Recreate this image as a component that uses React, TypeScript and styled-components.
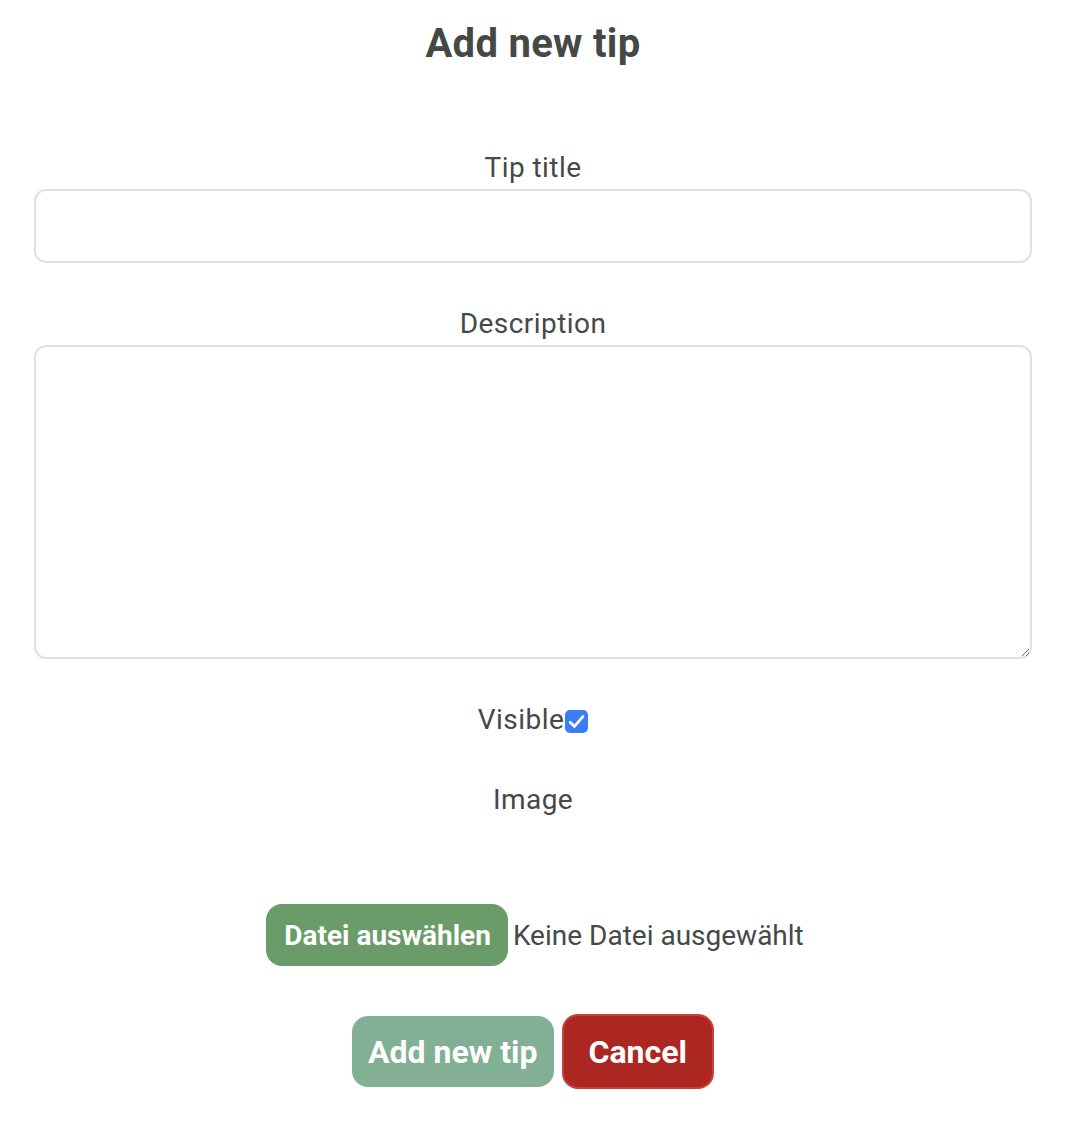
import styled, { createGlobalStyle } from "styled-components";

const GlobalStyle = createGlobalStyle`
    html, body {
        margin: 0;
        padding: 0;
        background: #ffffff;
    }
    body {
        font-family: Roboto, "Liberation Sans", Arial, sans-serif;
        color: #464946;
    }
`;

const App = () => {
    return (
        <>
            <GlobalStyle />
            <Page>
                <Title>Add new tip</Title>
                <Form onSubmit={(e) => e.preventDefault()}>
                    <Field>
                        <Label htmlFor="tip-title">Tip title</Label>
                        <TextInput id="tip-title" type="text" />
                    </Field>
                    <Field>
                        <Label htmlFor="tip-description">Description</Label>
                        <TextArea id="tip-description" />
                    </Field>
                    <CheckRow>
                        <Label as="span">Visible</Label>
                        <CheckBox>
                            <svg width="19" height="19" viewBox="0 0 16 16">
                                <path d="M2.6 8.6 L6.3 12.2 L13.4 3.8" fill="none" stroke="#fff" strokeWidth="2.3" strokeLinecap="round" strokeLinejoin="round" />
                            </svg>
                        </CheckBox>
                    </CheckRow>
                    <ImageField>
                        <Label as="span">Image</Label>
                    </ImageField>
                    <FileRow>
                        <FileButton>
                            Datei auswählen
                            <HiddenInput type="file" accept="image/*" />
                        </FileButton>
                        <FileName>Keine Datei ausgewählt</FileName>
                    </FileRow>
                    <Actions>
                        <SubmitButton type="submit">Add new tip</SubmitButton>
                        <CancelButton type="button">Cancel</CancelButton>
                    </Actions>
                </Form>
            </Page>
        </>
    );
};

const Page = styled.div`
    width: 1066px;
    box-sizing: border-box;
    padding: 20px 34px 40px;
    display: flex;
    flex-direction: column;
    align-items: stretch;
`;

const Title = styled.h1`
    margin: 0;
    font-size: 40px;
    line-height: 48px;
    font-weight: 700;
    letter-spacing: 0.3px;
    text-align: center;
    color: #454944;
`;

const Form = styled.form`
    display: flex;
    flex-direction: column;
    margin-top: 83px;
`;

const Field = styled.div`
    display: flex;
    flex-direction: column;
    align-items: stretch;
    gap: 4px;
    margin-bottom: 44px;
`;

const Label = styled.label`
    display: block;
    text-align: center;
    font-size: 28px;
    line-height: 34px;
    letter-spacing: 0.45px;
    color: #464946;
`;

const fieldBox = `
    box-sizing: border-box;
    width: 100%;
    border: 2px solid #dfe1e5;
    border-radius: 12px;
    background: #fff;
    font-family: Roboto, "Liberation Sans", Arial, sans-serif;
    font-size: 28px;
    color: #464946;
    outline: none;
`;

const TextInput = styled.input`
    ${fieldBox}
    height: 74px;
    padding: 0 16px;
`;

const TextArea = styled.textarea`
    ${fieldBox}
    height: 314px;
    padding: 12px 16px;
    resize: vertical;
    display: block;
`;

const CheckRow = styled.div`
    display: flex;
    justify-content: center;
    align-items: center;
    margin-bottom: 46px;
`;

const CheckBox = styled.span`
    width: 23px;
    height: 23px;
    margin-top: 2px;
    margin-left: 1px;
    border-radius: 5px;
    background: #3a7df6;
    display: inline-flex;
    align-items: center;
    justify-content: center;
`;

const ImageField = styled.div`
    margin-bottom: 87px;
`;

const FileRow = styled.div`
    display: flex;
    justify-content: center;
    align-items: center;
    gap: 5px;
    margin-left: 4px;
`;

const FileButton = styled.label`
    position: relative;
    height: 62px;
    box-sizing: border-box;
    padding: 0 17px 0 18px;
    display: inline-flex;
    align-items: center;
    border-radius: 16px;
    background: #699c69;
    color: #fff;
    font-size: 28px;
    font-weight: 700;
    cursor: pointer;
`;

const HiddenInput = styled.input`
    position: absolute;
    width: 1px;
    height: 1px;
    opacity: 0;
    pointer-events: none;
`;

const FileName = styled.span`
    font-size: 28px;
    color: #464946;
`;

const Actions = styled.div`
    display: flex;
    justify-content: center;
    align-items: center;
    gap: 8px;
    margin-top: 48px;
`;

const ButtonBase = styled.button`
    box-sizing: border-box;
    font-family: Roboto, "Liberation Sans", Arial, sans-serif;
    font-size: 32px;
    font-weight: 700;
    color: #fff;
    border-radius: 16px;
    cursor: pointer;
`;

const SubmitButton = styled(ButtonBase)`
    height: 71px;
    padding: 0 16px;
    border: none;
    background: #82b094;
`;

const CancelButton = styled(ButtonBase)`
    height: 75px;
    padding: 0 25px;
    border: 2px solid #c8403f;
    background: #ad2722;
`;

export default App;
